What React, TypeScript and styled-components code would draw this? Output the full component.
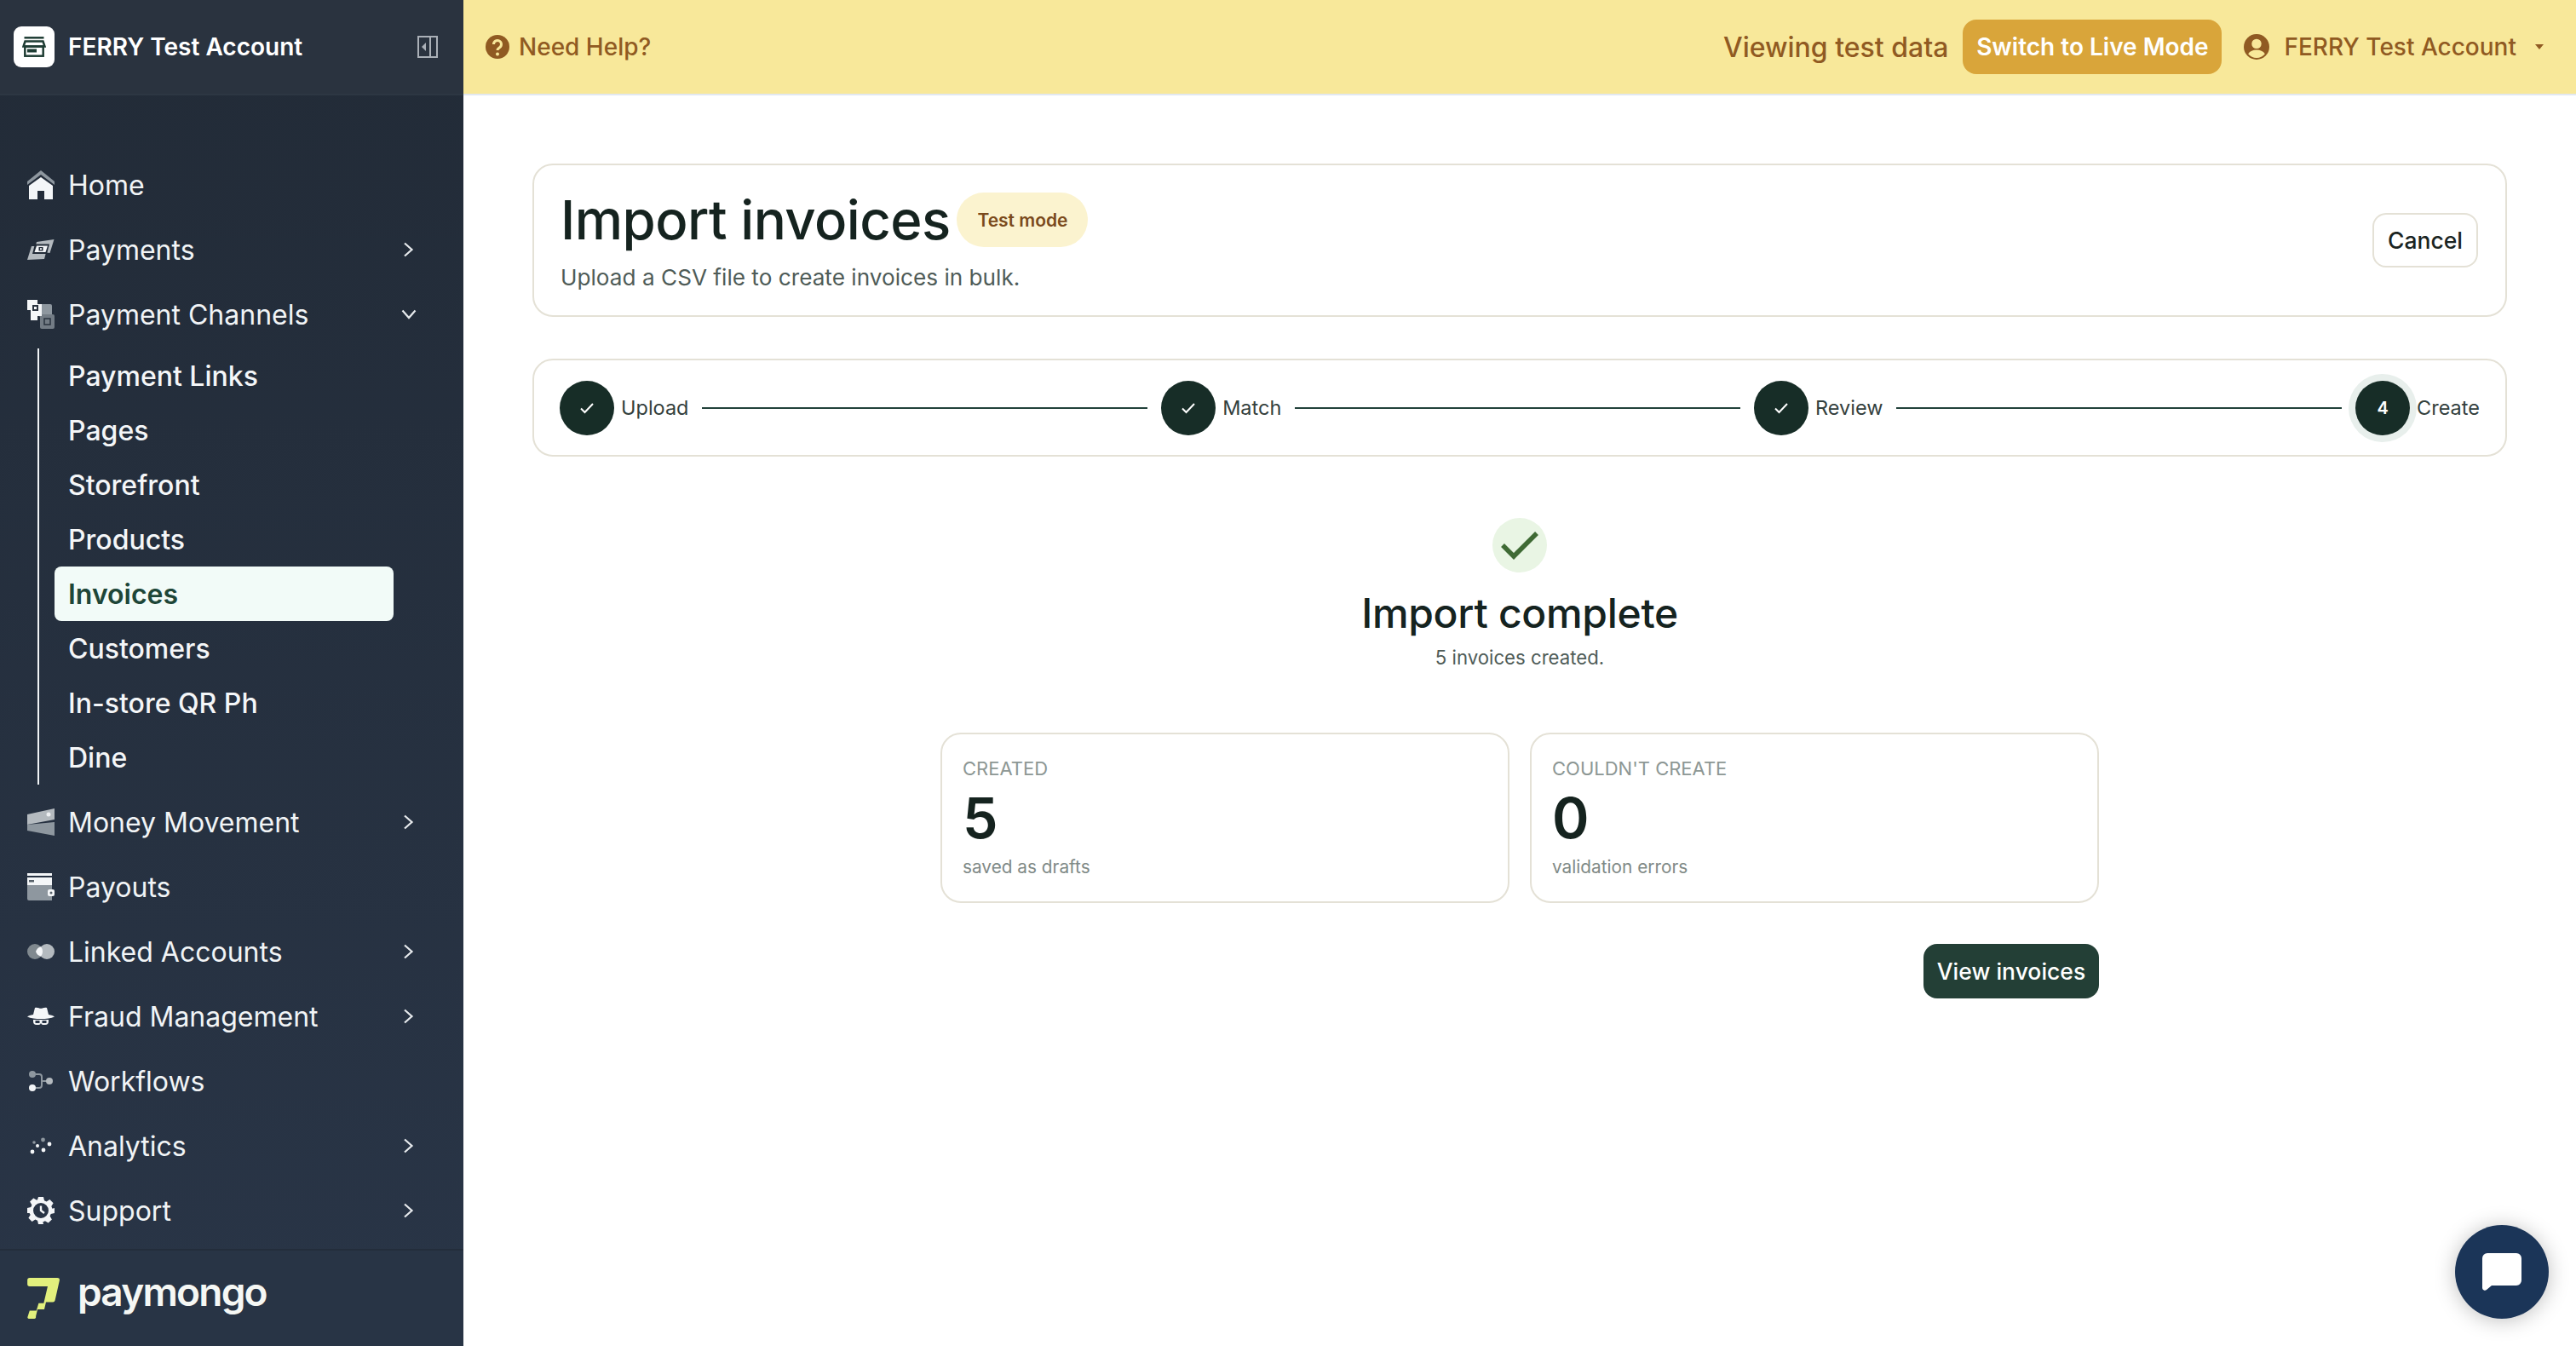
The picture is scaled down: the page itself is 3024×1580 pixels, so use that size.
import React from "react";
import styled, { createGlobalStyle } from "styled-components";

const Global = createGlobalStyle`
  html, body { margin: 0; padding: 0; background: #fff; }
  * { box-sizing: border-box; }
  body { font-family: "Inter", "Liberation Sans", sans-serif; }
`;

const Shell = styled.div`
  display: flex;
  width: 3024px;
  height: 1580px;
  overflow: hidden;
`;
const Sidebar = styled.aside`
  width: 544px;
  flex: none;
  display: flex;
  flex-direction: column;
  background: linear-gradient(180deg, #222b37 0%, #293547 100%);
  color: #f3f5f7;
`;
const Brand = styled.div`
  height: 112px;
  flex: none;
  display: flex;
  align-items: center;
  padding: 0 30px 0 16px;
  background: #2a333f;
  border-bottom: 2px solid #2d3743;
`;
const BrandTile = styled.div`
  width: 48px;
  height: 48px;
  border-radius: 9px;
  background: #fff;
  display: flex;
  align-items: center;
  justify-content: center;
  margin-right: 16px;
`;
const BrandName = styled.div`
  flex: 1;
  font-size: 28px;
  font-weight: 600;
  color: #fff;
  white-space: nowrap;
`;
const Nav = styled.nav`
  flex: 1;
  padding-top: 67px;
  display: flex;
  flex-direction: column;
`;
const NavRow = styled.div`
  height: 76px;
  display: flex;
  align-items: center;
  padding: 0 55px 0 32px;
  font-size: 32px;
  font-weight: 400;
  color: #f1f4f6;
`;
const NavIcon = styled.span`
  width: 32px;
  height: 34px;
  flex: none;
  margin-right: 16px;
  display: flex;
  align-items: center;
  justify-content: center;
`;
const NavLabel = styled.span`
  flex: 1;
  white-space: nowrap;
`;
const SubList = styled.div`
  margin: 2px 0 6px 44px;
  border-left: 2px solid #f1f4f6;
  padding-left: 18px;
  width: 418px;
  display: flex;
  flex-direction: column;
`;
const SubItem = styled.div<{ $active?: boolean }>`
  height: 64px;
  display: flex;
  align-items: center;
  padding-left: 16px;
  font-size: 32px;
  border-radius: 8px;
  color: ${(p) => (p.$active ? "#1e4638" : "#f4f6f8")};
  background: ${(p) => (p.$active ? "#f2fbf8" : "transparent")};
  font-weight: ${(p) => (p.$active ? 600 : 500)};
`;
const Footer = styled.div`
  height: 114px;
  flex: none;
  display: flex;
  align-items: center;
  padding: 0 0 0 32px;
  background: #283445;
  border-top: 2px solid #232d3b;
`;
const Wordmark = styled.span`
  margin-left: 21px;
  margin-top: -16px;
  font-size: 46px;
  font-weight: 600;
  letter-spacing: -1.8px;
  color: #f5f7f4;
`;
const Column = styled.div`
  flex: 1;
  min-width: 0;
  display: flex;
  flex-direction: column;
`;
const TopBar = styled.header`
  height: 112px;
  flex: none;
  display: flex;
  align-items: center;
  padding: 0 38px 0 26px;
  background: #f8e89a;
  border-bottom: 2px solid #e2e8f0;
  color: #905a22;
  font-size: 28px;
  font-weight: 500;
`;
const HelpLink = styled.div`
  display: flex;
  align-items: center;
  gap: 11px;
  flex: 1;
`;
const ViewingText = styled.span`
  font-size: 32px;
  margin-right: 17px;
  white-space: nowrap;
`;
const SwitchButton = styled.button`
  height: 64px;
  width: 304px;
  border: none;
  border-radius: 16px;
  background: #d9a53a;
  color: #fff;
  font: 600 28px "Inter", sans-serif;
  white-space: nowrap;
  padding: 0;
`;
const Account = styled.div`
  margin-left: 26px;
  display: flex;
  align-items: center;
  gap: 17px;
  white-space: nowrap;
`;
const Caret = styled.span`
  width: 0;
  height: 0;
  margin-left: 5px;
  border-left: 5px solid transparent;
  border-right: 5px solid transparent;
  border-top: 6px solid #905a22;
`;
const Main = styled.main`
  flex: 1;
  padding: 80px 81px 0;
  display: flex;
  flex-direction: column;
  font-family: "Inter", "Liberation Sans", sans-serif;
`;
const Card = styled.section`
  border: 2px solid #e4e1d6;
  border-radius: 24px;
  background: #fff;
`;
const HeaderCard = styled(Card)`
  height: 180px;
  padding: 0 32px 0 31px;
  display: flex;
  align-items: center;
  justify-content: space-between;
`;
const TitleRow = styled.div`
  display: flex;
  align-items: center;
  gap: 8px;
`;
const Title = styled.h1`
  margin: 0;
  font-size: 63.5px;
  line-height: 74px;
  font-weight: 500;
  letter-spacing: -0.6px;
  color: #15231f;
  white-space: nowrap;
`;
const Badge = styled.span`
  height: 64px;
  width: 154px;
  border-radius: 32px;
  background: #fbf3cf;
  color: #7a4a1c;
  font-size: 21px;
  font-weight: 600;
  display: flex;
  align-items: center;
  justify-content: center;
  white-space: nowrap;
`;
const Subtitle = styled.p`
  margin: 14px 0 0;
  font-size: 26.2px;
  line-height: 34px;
  color: #4f5c58;
`;
const GhostButton = styled.button`
  width: 124px;
  height: 64px;
  border: 2px solid #e4e1d6;
  border-radius: 16px;
  background: #fff;
  color: #1a2422;
  font: 500 26.5px "Inter", sans-serif;
  padding: 0;
`;
const Stepper = styled(Card)`
  margin-top: 49px;
  height: 115px;
  padding: 0 30px;
  display: flex;
  align-items: center;
`;
const Step = styled.div`
  display: flex;
  align-items: center;
  gap: 8px;
  flex: none;
`;
const StepDot = styled.span<{ $current?: boolean }>`
  width: 64px;
  height: 64px;
  border-radius: 50%;
  background: #172d27;
  color: #fff;
  display: flex;
  align-items: center;
  justify-content: center;
  font-size: 20px;
  font-weight: 600;
  box-shadow: ${(p) => (p.$current ? "0 0 0 8px #e8efec" : "none")};
`;
const StepLabel = styled.span`
  font-size: 23.5px;
  color: #33403d;
  white-space: nowrap;
`;
const StepLine = styled.span`
  flex: 1;
  height: 2px;
  margin: 0 16px;
  background: #21413a;
`;
const Result = styled.div`
  width: 1360px;
  align-self: center;
  display: flex;
  flex-direction: column;
  align-items: center;
  padding-top: 72px;
`;
const ResultIcon = styled.div`
  width: 64px;
  height: 64px;
  border-radius: 50%;
  background: #e9f5e4;
  display: flex;
  align-items: center;
  justify-content: center;
`;
const ResultTitle = styled.h2`
  margin: 20px 0 0;
  font-size: 48px;
  line-height: 56px;
  font-weight: 500;
  letter-spacing: -0.3px;
  color: #15231f;
`;
const ResultSub = styled.p`
  margin: 8px 0 0;
  font-size: 22.2px;
  line-height: 32px;
  color: #4f5c58;
`;
const Stats = styled.div`
  width: 100%;
  margin-top: 72px;
  display: grid;
  grid-template-columns: 1fr 1fr;
  gap: 24px;
`;
const StatCard = styled(Card)`
  height: 200px;
  padding: 24px;
  display: flex;
  flex-direction: column;
`;
const StatLabel = styled.div`
  font-size: 22px;
  line-height: 32px;
  color: #8d9794;
`;
const StatValue = styled.div`
  margin-top: 4px;
  font-size: 66px;
  line-height: 76px;
  font-weight: 600;
  color: #15231f;
`;
const StatNote = styled.div`
  margin-top: 5px;
  font-size: 20.8px;
  line-height: 30px;
  color: #7f8a87;
`;
const Actions = styled.div`
  width: 100%;
  margin-top: 48px;
  display: flex;
  justify-content: flex-end;
`;
const PrimaryButton = styled.button`
  width: 206px;
  height: 64px;
  border: none;
  border-radius: 16px;
  background: #233f36;
  color: #fff;
  font: 500 26.5px "Inter", sans-serif;
  padding: 0;
`;
const ChatFab = styled.button`
  position: fixed;
  right: 32px;
  bottom: 32px;
  width: 110px;
  height: 110px;
  border: none;
  border-radius: 50%;
  background: #1b3558;
  box-shadow: 0 2px 24px rgba(0, 0, 0, 0.25);
  display: flex;
  align-items: center;
  justify-content: center;
  padding: 0;
`;

const W = "#f4f6f8";
const G1 = "#8e979f";
const G2 = "#b4babf";

const icons: Record<string, React.ReactNode> = {
  home: (
    <svg width="32" height="34" viewBox="0 0 32 34">
      <path d="M16 0 32 13v4L16 5 0 17v-4z" fill={G1} />
      <path d="M16 8 30 18v16H20V24h-8v10H2V18z" fill={W} />
    </svg>
  ),
  payments: (
    <svg width="32" height="24" viewBox="0 0 32 24">
      <path d="M11 3 31.500 0 26.500 16 19 15 21 7H10z" fill={G2} />
      <path d="M5 8H24L20 23 0 24z" fill={G2} />
      <path d="M9 5.500H26L23 17H6z" fill="#222b37" />
      <path d="M11 7.500H24L21.500 15H8.500z" fill={W} />
      <rect x="13.500" y="9" width="5" height="4.500" fill="#222b37" />
      <rect x="15" y="10.200" width="2" height="2" fill={W} />
    </svg>
  ),
  channels: (
    <svg width="32" height="34" viewBox="0 0 32 34">
      <rect x="14" y="5" width="15" height="15" rx="2" fill={G1} />
      <rect x="15" y="17" width="17" height="17" rx="2" fill="#737c85" />
      <rect x="20" y="22" width="7" height="7" fill="none" stroke="#2a333f" strokeWidth="1.500" />
      <path d="M0 0h12v5h5v14h-5v5H4V12H0z" fill={W} />
      <rect x="6" y="6" width="7" height="7" fill="#2a333f" />
      <rect x="8" y="8" width="3" height="3" fill={W} />
    </svg>
  ),
  money: (
    <svg width="32" height="32" viewBox="0 0 32 32">
      <path d="M0 7 32 0v13L0 19z" fill={G2} />
      <path d="M0 19 32 16v16L0 26z" fill={G1} />
      <circle cx="25" cy="7" r="2.500" fill="#eef0f2" />
    </svg>
  ),
  payouts: (
    <svg width="32" height="32" viewBox="0 0 32 32">
      <rect x="0" y="0" width="29" height="3" fill={W} />
      <rect x="0" y="5" width="29" height="9" fill={W} />
      <rect x="2" y="8" width="6" height="2.500" fill="#566069" />
      <path d="M0 14h29v18H2a2 2 0 0 1-2-2z" fill={G1} />
      <rect x="24" y="19" width="8" height="8" rx="2" fill={W} />
      <circle cx="28" cy="23" r="1.500" fill="#566069" />
    </svg>
  ),
  linked: (
    <svg width="32" height="18" viewBox="0 0 32 18">
      <circle cx="9" cy="9" r="9" fill="#80898f" />
      <circle cx="23" cy="9" r="9" fill={G2} />
      <path d="M16 3.300a9 9 0 0 1 0 11.400 9 9 0 0 1-6-5.700 9 9 0 0 1 6-5.700z" fill={W} />
    </svg>
  ),
  fraud: (
    <svg width="32" height="22" viewBox="0 0 32 22">
      <path d="M9 1c3-1 5 0.800 7 0.800S20 0 23 1l2 8c3 .5 6 1.500 7 2.500-4 2-10 2.500-16 2.500S4 13.500 0 11.500C1 10.500 4 9.500 7 9z" fill={W} />
      <path d="M7 15h18v2a4 4 0 0 1-4 4h-2.500a3 3 0 0 1-2.500-2 3 3 0 0 1-2.500 2H11a4 4 0 0 1-4-4z" fill={W} />
      <rect x="9.500" y="16" width="5" height="3" fill="#293547" />
      <rect x="17.500" y="16" width="5" height="3" fill="#293547" />
    </svg>
  ),
  workflows: (
    <svg width="28" height="24" viewBox="0 0 28 24">
      <path d="M8 4h4a3 3 0 0 1 3 3v10a3 3 0 0 1-3 3H8M15 12h6" fill="none" stroke="#8e979f" strokeWidth="2" />
      <circle cx="4" cy="4" r="4" fill={G1} />
      <circle cx="24" cy="12" r="4" fill={G2} />
      <circle cx="4" cy="20" r="4" fill={W} />
    </svg>
  ),
  analytics: (
    <svg width="26" height="20" viewBox="0 0 26 20">
      <circle cx="3" cy="17" r="2.400" fill={W} />
      <circle cx="5" cy="6" r="1.800" fill={G1} />
      <circle cx="9" cy="10" r="2" fill={W} />
      <circle cx="16" cy="15" r="2.400" fill={W} />
      <circle cx="15.500" cy="3" r="2.400" fill={G1} />
      <circle cx="23" cy="8" r="2.400" fill={W} />
    </svg>
  ),
  support: (
    <svg width="32" height="32" viewBox="0 0 32 32">
      <path
        fillRule="evenodd"
        fill={W}
        d="M13 0h6l1 4.300 2.600 1.100 3.800-2.300 4.200 4.200-2.300 3.800 1.100 2.600L32 13v6l-4.300 1-1.100 2.600 2.300 3.800-4.200 4.200-3.800-2.300-2.600 1.100L19 32h-6l-1-4.300-2.600-1.100-3.800 2.300-4.200-4.200 2.300-3.800L2.600 19 0 19v-6l4.300-1 1.100-2.600L3.100 5.600 7.300 1.400l3.800 2.300L12 3.300zM16 7a9 9 0 1 0 0 18 9 9 0 0 0 0-18z"
      />
      <path d="M16 10.500V16l4 3" fill="none" stroke={W} strokeWidth="2.400" />
    </svg>
  ),
};

const ChevronRight = () => (
  <svg width="18" height="18" viewBox="0 0 18 18" fill="none" stroke="#e8ebee" strokeWidth="2.200">
    <path d="M4 1.500 12.500 9 4 16.500" />
  </svg>
);
const ChevronDown = () => (
  <svg width="18" height="18" viewBox="0 0 18 18" fill="none" stroke="#e8ebee" strokeWidth="2.200">
    <path d="M1.500 4.500 9 13 16.500 4.500" />
  </svg>
);
const StepCheck = () => (
  <svg width="18" height="14" viewBox="0 0 18 14" fill="none" stroke="#fff" strokeWidth="2">
    <path d="M2 7.500 6.500 12 16 2" />
  </svg>
);

const Item = ({ icon, label, chevron }: { icon: string; label: string; chevron?: "right" | "down" }) => (
  <NavRow>
    <NavIcon>{icons[icon]}</NavIcon>
    <NavLabel>{label}</NavLabel>
    {chevron === "right" && <ChevronRight />}
    {chevron === "down" && <ChevronDown />}
  </NavRow>
);

const subs = ["Payment Links", "Pages", "Storefront", "Products", "Invoices", "Customers", "In-store QR Ph", "Dine"];

export default function App() {
  return (
    <Shell>
      <Global />
      <Sidebar>
        <Brand>
          <BrandTile>
            <svg width="28" height="24" viewBox="0 0 28 24" fill="none" stroke="#1f3d34" strokeWidth="2.500">
              <path d="M2.500 1.300H25.500" />
              <path d="M3.500 5.500H24.500L26.500 11.500H1.500z" />
              <rect x="3.300" y="11.500" width="21.400" height="11.200" />
              <rect x="6" y="14.500" width="11" height="4" fill="#1f3d34" stroke="none" />
            </svg>
          </BrandTile>
          <BrandName>FERRY Test Account</BrandName>
          <svg width="24" height="26" viewBox="0 0 24 26">
            <rect x="1" y="1" width="22" height="24" fill="none" stroke="#aab0b7" strokeWidth="2" />
            <rect x="14" y="1" width="2" height="24" fill="#aab0b7" />
            <path d="M10 8v10l-5-5z" fill="#aab0b7" />
          </svg>
        </Brand>
        <Nav>
          <Item icon="home" label="Home" />
          <Item icon="payments" label="Payments" chevron="right" />
          <Item icon="channels" label="Payment Channels" chevron="down" />
          <SubList>
            {subs.map((s) => (
              <SubItem key={s} $active={s === "Invoices"}>
                {s}
              </SubItem>
            ))}
          </SubList>
          <Item icon="money" label="Money Movement" chevron="right" />
          <Item icon="payouts" label="Payouts" />
          <Item icon="linked" label="Linked Accounts" chevron="right" />
          <Item icon="fraud" label="Fraud Management" chevron="right" />
          <Item icon="workflows" label="Workflows" />
          <Item icon="analytics" label="Analytics" chevron="right" />
          <Item icon="support" label="Support" chevron="right" />
        </Nav>
        <Footer>
          <svg width="38" height="48" viewBox="0 0 114 145">
            <path
              d="M8 0H106a8 8 0 0 1 8 9L98 80a8 8 0 0 1-8 6H66L60 112H36L30 137a6 6 0 0 1-6 8H6a5 5 0 0 1-5-7L8 116H32L40 90H58L72 30H8a8 8 0 0 1-8-8V8a8 8 0 0 1 8-8z"
              fill="#e2f07d"
            />
          </svg>
          <Wordmark>paymongo</Wordmark>
        </Footer>
      </Sidebar>
      <Column>
        <TopBar>
          <HelpLink>
            <svg width="28" height="28" viewBox="0 0 28 28">
              <circle cx="14" cy="14" r="14" fill="#905a22" />
              <path d="M9.500 11a4.500 4.500 0 1 1 7 3.700c-1.500 1-2.500 1.500-2.500 3.300" fill="none" stroke="#f8e89a" strokeWidth="3" />
              <circle cx="14" cy="22.500" r="2" fill="#f8e89a" />
            </svg>
            Need Help?
          </HelpLink>
          <ViewingText>Viewing test data</ViewingText>
          <SwitchButton>Switch to Live Mode</SwitchButton>
          <Account>
            <svg width="30" height="30" viewBox="0 0 29 29">
              <circle cx="14.500" cy="14.500" r="14.500" fill="#905a22" />
              <circle cx="14.500" cy="11" r="5.500" fill="#f8e89a" />
              <path d="M5 22.500c2-3 5.500-4.500 9.500-4.500s7.500 1.500 9.500 4.500a12 12 0 0 1-19 0z" fill="#f8e89a" />
            </svg>
            FERRY Test Account
            <Caret />
          </Account>
        </TopBar>
        <Main>
          <HeaderCard>
            <div>
              <TitleRow>
                <Title>Import invoices</Title>
                <Badge>Test mode</Badge>
              </TitleRow>
              <Subtitle>Upload a CSV file to create invoices in bulk.</Subtitle>
            </div>
            <GhostButton>Cancel</GhostButton>
          </HeaderCard>
          <Stepper>
            <Step>
              <StepDot><StepCheck /></StepDot>
              <StepLabel>Upload</StepLabel>
            </Step>
            <StepLine />
            <Step>
              <StepDot><StepCheck /></StepDot>
              <StepLabel>Match</StepLabel>
            </Step>
            <StepLine />
            <Step>
              <StepDot><StepCheck /></StepDot>
              <StepLabel>Review</StepLabel>
            </Step>
            <StepLine />
            <Step>
              <StepDot $current>4</StepDot>
              <StepLabel>Create</StepLabel>
            </Step>
          </Stepper>
          <Result>
            <ResultIcon>
              <svg width="46" height="34" viewBox="0 0 46 34" fill="none" stroke="#3f6a34" strokeWidth="5.500">
                <path d="M3 17 16 30 43 3" />
              </svg>
            </ResultIcon>
            <ResultTitle>Import complete</ResultTitle>
            <ResultSub>5 invoices created.</ResultSub>
            <Stats>
              <StatCard>
                <StatLabel>CREATED</StatLabel>
                <StatValue>5</StatValue>
                <StatNote>saved as drafts</StatNote>
              </StatCard>
              <StatCard>
                <StatLabel>COULDN'T CREATE</StatLabel>
                <StatValue>0</StatValue>
                <StatNote>validation errors</StatNote>
              </StatCard>
            </Stats>
            <Actions>
              <PrimaryButton>View invoices</PrimaryButton>
            </Actions>
          </Result>
        </Main>
      </Column>
      <ChatFab aria-label="Chat">
        <svg width="46" height="44" viewBox="0 0 46 44">
          <path d="M6 0h34a6 6 0 0 1 6 6v26a6 6 0 0 1-6 6H11l-6 5a3 3 0 0 1-5-2V6a6 6 0 0 1 6-6z" fill="#fff" />
        </svg>
      </ChatFab>
    </Shell>
  );
}
